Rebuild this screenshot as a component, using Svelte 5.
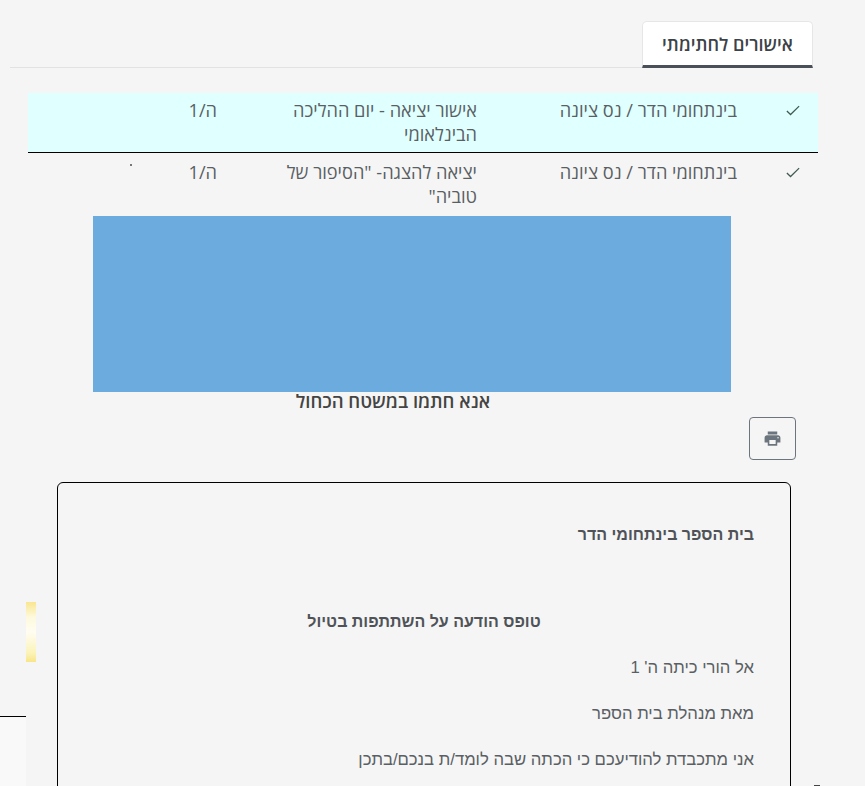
<script>
  const approvals = [
    { school: "בינתחומי הדר / נס ציונה", title: "אישור יציאה - יום ההליכה הבינלאומי", group: "ה/1", active: true },
    { school: "בינתחומי הדר / נס ציונה", title: 'יציאה להצגה- "הסיפור של טוביה"', group: "ה/1", active: false, mark: true },
  ];
</script>

<div class="page" dir="rtl">
  <nav class="tabs">
    <button class="tab">אישורים לחתימתי</button>
  </nav>

  <div class="approvals">
    {#each approvals as row}
      <div class="row" class:active={row.active}>
        <div class="cell check">
          <svg viewBox="0 0 16 12" width="14" height="11" fill="none" stroke="#3f5a50" stroke-width="1.4">
            <path d="M1 6.5 5.2 10.6 15 1" />
          </svg>
        </div>
        <div class="cell">{row.school}</div>
        <div class="cell">{row.title}</div>
        <div class="cell">{row.group}</div>
        <div class="cell">
          {#if row.mark}<span class="mark"></span>{/if}
        </div>
      </div>
    {/each}
  </div>

  <div class="signature-area"></div>
  <p class="signature-note">אנא חתמו במשטח הכחול</p>

  <div class="actions">
    <button class="print" aria-label="הדפסה">
      <svg viewBox="0 0 24 24" width="19" height="19" fill="#6c757d">
        <path d="M19 8H5c-1.66 0-3 1.34-3 3v6h4v4h12v-4h4v-6c0-1.66-1.34-3-3-3zm-3 11H8v-5h8v5zm3-7c-.55 0-1-.45-1-1s.45-1 1-1 1 .45 1 1-.45 1-1 1zm-1-9H6v4h12V3z" />
      </svg>
    </button>
  </div>

  <article class="letter">
    <p><strong>בית הספר בינתחומי הדר</strong></p>
    <p class="blank"></p>
    <p class="center"><strong>טופס הודעה על השתתפות בטיול</strong></p>
    <p>אל הורי כיתה ה' 1</p>
    <p>מאת מנהלת בית הספר</p>
    <p>אני מתכבדת להודיעכם כי הכתה שבה לומד/ת בנכם/בתכן</p>
  </article>

  <div class="stray-glow"></div>
  <div class="stray-panel"></div>
  <div class="stray-tick"></div>
</div>

<style>
  :global(body) {
    margin: 0;
    background: #f5f5f5;
  }

  .page {
    position: relative;
    height: 786px;
    overflow: hidden;
    padding-top: 21px;
    box-sizing: border-box;
    font-family: "Open Sans", "Noto Sans", "DejaVu Sans", sans-serif;
    font-size: 18.2px;
    line-height: 24px;
    color: #5a5f64;
  }

  .tabs {
    display: flex;
    height: 46px;
    margin: 0 52px 0 0;
    width: 803px;
    border-bottom: 1px solid #e2e2e2;
  }

  .tab {
    width: 171px;
    height: 47px;
    padding: 0;
    background: #fff;
    border: 1px solid #e6e6e6;
    border-bottom: 3px solid #495057;
    border-radius: 5px 5px 0 0;
    font: 600 18px/24px "Open Sans", "Noto Sans", "DejaVu Sans", sans-serif;
    color: #3c4248;
  }

  .approvals {
    width: 790px;
    margin: 25px 47px 0 0;
  }

  .row {
    display: grid;
    grid-template-columns: 69px 260px 260px 60px 141px;
  }

  .row.active {
    background: #e0ffff;
    border-bottom: 1px solid #000;
  }

  .cell {
    padding: 7px 12px 5px;
  }

  .row.active .cell {
    padding: 5px 12px 6px;
  }

  .row .check,
  .row.active .check {
    padding-left: 0;
    padding-right: 18px;
  }

  .check svg {
    display: block;
    margin-top: 7px;
  }

  .mark {
    display: block;
    width: 2px;
    height: 2px;
    margin: 4px 25px 0 0;
    background: #777;
  }

  .signature-area {
    width: 638px;
    height: 176px;
    margin: 3px 134px 0 0;
    background: #6cabdd;
  }

  .signature-note {
    width: 638px;
    margin: 0 134px 0 0;
    padding-right: 38px;
    box-sizing: border-box;
    text-align: center;
    font-size: 18.5px;
    font-weight: 600;
    line-height: 18px;
    color: #444;
  }

  .actions {
    display: flex;
    margin: 7px 69px 0 0;
  }

  .print {
    display: flex;
    align-items: center;
    justify-content: center;
    width: 47px;
    height: 43px;
    padding: 0;
    background: transparent;
    border: 1px solid #6c757d;
    border-radius: 4px;
  }

  .letter {
    width: 734px;
    height: 400px;
    margin: 22px 74px 0 0;
    padding: 40px 36px 0;
    box-sizing: border-box;
    border: 1px solid #000;
    border-radius: 6px;
    font-family: "Liberation Sans", Arial, sans-serif;
    font-size: 16.7px;
  }

  .letter p {
    margin: 0 0 22px;
  }

  .letter strong {
    font-size: 16px;
    font-weight: 700;
    color: #4f5358;
  }

  .letter .blank {
    height: 19px;
  }

  .letter .center {
    text-align: center;
  }

  .stray-glow {
    position: absolute;
    left: 26px;
    top: 602px;
    width: 10px;
    height: 60px;
    background: linear-gradient(#f9e68f, #fdf9dc 25%, #fffdf2 50%, #fbf3b8 85%, #f8e588);
  }

  .stray-panel {
    position: absolute;
    left: 0;
    top: 716px;
    width: 26px;
    height: 70px;
    background: #f9f9f9;
    border-top: 1px solid #000;
  }

  .stray-tick {
    position: absolute;
    left: 814px;
    top: 785px;
    width: 6px;
    height: 1px;
    background: #444;
  }
</style>
